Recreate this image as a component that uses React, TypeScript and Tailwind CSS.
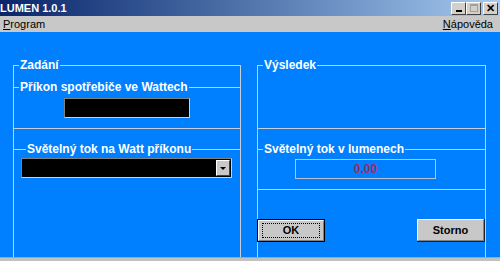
import React from 'react';

const font = { fontFamily: '"Liberation Sans", Arial, sans-serif' };
const narrow = { fontFamily: '"Liberation Sans Narrow", "Arial Narrow", "Liberation Sans", sans-serif' };

const TitleButton: React.FC<{ children: React.ReactNode }> = ({ children }) => (
  <div className="flex h-[13px] w-[15px] items-center justify-center border border-t-white border-l-white border-r-[#404040] border-b-[#404040] bg-[#d4d0c8]">
    {children}
  </div>
);

const Legend: React.FC<{ children: React.ReactNode; className?: string }> = ({ children, className = '' }) => (
  <legend className={`ml-[5px] px-px text-[12px] font-bold leading-[13px] text-white ${className}`}>{children}</legend>
);

const WinButton: React.FC<{ label: string; isDefault?: boolean }> = ({ label, isDefault }) => (
  <div className={`h-[23px] w-[68px] bg-[#c8c8c8] ${isDefault ? 'border border-black' : 'border-b border-r border-[#202020]'}`}>
    <div className="flex h-full w-full items-center justify-center border border-t-white border-l-white border-r-[#808080] border-b-[#808080]">
      {isDefault ? (
        <div className="flex h-[15px] w-[58px] items-center justify-center border border-dotted border-black text-[11px] font-bold text-black">
          {label}
        </div>
      ) : (
        <span className="text-[11px] font-bold text-black">{label}</span>
      )}
    </div>
  </div>
);

export default function App() {
  return (
    <div className="flex h-[261px] w-[500px] flex-col overflow-hidden bg-[#0080ff]" style={font}>
      {/* title bar */}
      <div className="flex h-[16px] items-center justify-between bg-gradient-to-r from-[#0a246a] to-[#a6caf0] pr-[2px]">
        <span className="text-[11px] font-bold leading-none text-white" style={narrow}>LUMEN 1.0.1</span>
        <div className="flex gap-0">
          <TitleButton>
            <div className="mt-[6px] h-[2px] w-[6px] bg-black" />
          </TitleButton>
          <div className="mr-[2px]">
            <TitleButton>
              <div className="h-[8px] w-[8px] border border-t-2 border-[#a0a0a0]" />
            </TitleButton>
          </div>
          <TitleButton>
            <span className="text-[11px] font-bold leading-none text-black">✕</span>
          </TitleButton>
        </div>
      </div>

      {/* menu bar */}
      <div className="flex h-[16px] items-center justify-between bg-[#c8c8c8] px-[3px] text-[11px] text-black" style={narrow}>
        <span><span className="underline">P</span>rogram</span>
        <span className="mr-[4px]"><span className="underline">N</span>ápověda</span>
      </div>

      {/* client area */}
      <div className="flex h-[226px] gap-[16px] overflow-hidden border-b border-[#a0a8b0] pl-[13px] pt-[27px]">
        {/* Zadání */}
        <fieldset className="h-[240px] w-[228px] shrink-0 border border-[#c6cfdc]">
          <Legend>Zadání</Legend>
          <fieldset className="mt-[9px] border-t border-b border-[#c6cfdc] pb-[10px]">
            <Legend>Příkon spotřebiče ve Wattech</Legend>
            <div className="mt-[4px] flex justify-center">
              <div className="h-[20px] w-[126px] border border-t-[#808080] border-l-[#808080] border-r-[#d0d0d0] border-b-[#d0d0d0] bg-black" />
            </div>
          </fieldset>
          <fieldset className="mt-[14px] border-t border-[#c6cfdc] pl-[7px] pr-[8px]">
            <Legend className="-ml-[2px]">Světelný tok na Watt příkonu</Legend>
            <div className="mt-[2px] flex h-[20px] items-center border border-t-[#808080] border-l-[#808080] border-r-[#d0d0d0] border-b-[#d0d0d0] bg-black pr-px">
              <div className="flex-1" />
              <div className="flex h-[16px] w-[14px] items-center justify-center border border-t-white border-l-white border-r-[#404040] border-b-[#404040] bg-[#c8c8c8]">
                <div className="h-0 w-0 border-x-[3px] border-t-[3px] border-x-transparent border-t-black" />
              </div>
            </div>
          </fieldset>
        </fieldset>

        {/* Výsledek */}
        <fieldset className="h-[240px] w-[229px] shrink-0 border border-[#c6cfdc]">
          <Legend>Výsledek</Legend>
          <div className="h-[57px] border-b border-[#c6cfdc]" />
          <fieldset className="mt-[14px] border-t border-b border-[#c6cfdc] pb-[10px]">
            <Legend>Světelný tok v lumenech</Legend>
            <div className="ml-[37px] mt-[3px] flex h-[20px] w-[141px] items-center justify-center border border-[#b8c4d4]">
              <span className="text-[12px] font-bold text-[#a8285a]">0.00</span>
            </div>
          </fieldset>
          <div className="-ml-px mt-[29px] flex justify-between">
            <WinButton label="OK" isDefault />
            <WinButton label="Storno" />
          </div>
        </fieldset>
      </div>
      <div className="flex-1 bg-[#c0c0c0]" />
    </div>
  );
}
